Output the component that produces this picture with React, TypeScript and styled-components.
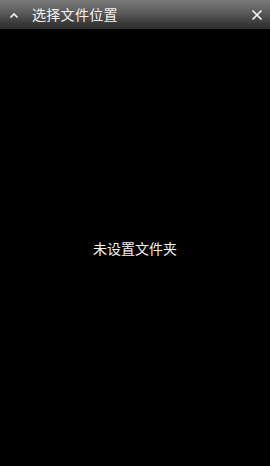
import React from 'react';
import styled, { createGlobalStyle } from 'styled-components';

const GlobalStyle = createGlobalStyle`
  html, body {
    margin: 0;
    padding: 0;
    background: #000;
  }
  #root {
    height: 466px;
  }
`;

const Screen = styled.div`
  width: 270px;
  height: 466px;
  display: flex;
  flex-direction: column;
  background: #000;
  font-family: "Noto Sans CJK SC", "Noto Sans", sans-serif;
`;

const TitleBar = styled.div`
  height: 29px;
  flex: none;
  display: flex;
  align-items: center;
  padding: 0 6px 0 7px;
  background: linear-gradient(to bottom, #7a7a7a 0%, #5a5a5a 45%, #3a3a3a 80%, #2e2e2e 100%);
`;

const IconButton = styled.div`
  width: 14px;
  height: 14px;
  display: flex;
  align-items: center;
  justify-content: center;
  flex: none;
`;

const Title = styled.div`
  flex: 1;
  margin-left: 11px;
  color: #f2f2f2;
  font-size: 14px;
  line-height: 29px;
  letter-spacing: 0.3px;
`;

const Body = styled.div`
  flex: 1;
  display: flex;
  align-items: center;
  justify-content: center;
`;

const Empty = styled.div`
  color: #f4f4f4;
  font-size: 14px;
`;

export default function App() {
  return (
    <>
      <GlobalStyle />
      <Screen>
        <TitleBar>
          <IconButton>
            <svg width="12" height="10" viewBox="0 0 12 10">
              <path d="M2.5 7.5 L6 4 L9.5 7.5" stroke="#f0f0f0" strokeWidth="1.7" fill="none" />
            </svg>
          </IconButton>
          <Title>选择文件位置</Title>
          <IconButton>
            <svg width="14" height="14" viewBox="0 0 14 14">
              <path d="M2.5 2.5 L11.5 11.5 M11.5 2.5 L2.5 11.5" stroke="#f4f4f4" strokeWidth="1.7" fill="none" />
            </svg>
          </IconButton>
        </TitleBar>
        <Body>
          <Empty>未设置文件夹</Empty>
        </Body>
      </Screen>
    </>
  );
}
